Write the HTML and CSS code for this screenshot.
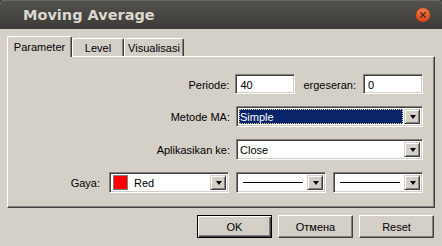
FILE: index.html
```html
<!DOCTYPE html>
<html>
<head>
<meta charset="utf-8">
<link rel="stylesheet" href="styles.css">
</head>
<body>
<div class="window">
  <div class="titlebar">
    <span class="title">Moving Average</span>
    <svg class="close" width="16" height="16" viewBox="0 0 16 16">
      <defs>
        <linearGradient id="cg" x1="0" y1="0" x2="0" y2="1">
          <stop offset="0" stop-color="#f47a4a"/>
          <stop offset="1" stop-color="#d8461a"/>
        </linearGradient>
      </defs>
      <circle cx="8" cy="8" r="7.2" fill="url(#cg)" stroke="#8a3a1c" stroke-width="0.6"/>
      <path d="M5.6 5.6 L10.4 10.4 M10.4 5.6 L5.6 10.4" stroke="#3a2a22" stroke-width="1.2" stroke-linecap="round"/>
    </svg>
  </div>
  <div class="content">
    <div class="tabs">
      <div class="tab active">Parameter</div>
      <div class="tab t-level">Level</div>
      <div class="tab t-vis">Visualisasi</div>
    </div>
    <div class="panel">
      <div class="row">
        <span class="label">Periode:</span>
        <div class="field input"><span>40</span></div>
        <span class="label2">ergeseran:</span>
        <div class="field input"><span>0</span></div>
      </div>
      <div class="row">
        <span class="label">Metode MA:</span>
        <div class="field combo wide">
          <div class="value selected">Simple</div>
          <div class="dd"><span class="tri"></span></div>
        </div>
      </div>
      <div class="row">
        <span class="label">Aplikasikan ke:</span>
        <div class="field combo wide">
          <div class="value">Close</div>
          <div class="dd"><span class="tri"></span></div>
        </div>
      </div>
      <div class="row row-style">
        <span class="label3">Gaya:</span>
        <div class="field combo color">
          <div class="value colorval"><span class="swatch"></span><span>Red</span></div>
          <div class="dd"><span class="tri"></span></div>
        </div>
        <div class="field combo line">
          <div class="value lineval"><span class="hline"></span></div>
          <div class="dd"><span class="tri"></span></div>
        </div>
        <div class="field combo line">
          <div class="value lineval"><span class="hline"></span></div>
          <div class="dd"><span class="tri"></span></div>
        </div>
      </div>
    </div>
    <div class="buttons">
      <div class="btn default"><span>OK</span></div>
      <div class="btn">Отмена</div>
      <div class="btn">Reset</div>
    </div>
  </div>
</div>
</body>
</html>
```

FILE: styles.css
```css
* { box-sizing: border-box; }
html, body {
  margin: 0;
  padding: 0;
  width: 442px;
  height: 246px;
  background: #3c3b37;
  overflow: hidden;
}
body {
  font-family: "Liberation Sans", Arial, sans-serif;
  font-size: 11px;
  color: #000;
}
.window {
  width: 442px;
  height: 246px;
  display: flex;
  flex-direction: column;
  background: #d4d0c8;
  border-radius: 5px 5px 0 0;
  overflow: hidden;
}
.titlebar {
  height: 29px;
  flex: none;
  display: flex;
  align-items: center;
  padding-left: 23px;
  padding-right: 11px;
  background: linear-gradient(#52514c, #3c3b37);
  border-top: 1px solid #65645f;
}
.title {
  font-family: "DejaVu Sans", sans-serif;
  font-weight: bold;
  font-size: 14.5px;
  color: #dcd8cf;
  margin-top: -1px;
}
.close {
  margin-left: auto;
  display: block;
}
.content {
  flex: 1;
  display: flex;
  flex-direction: column;
  padding: 7px 7px 0 7px;
}
.tabs {
  display: flex;
  align-items: flex-end;
  height: 20px;
}
.tab {
  height: 18px;
  padding-top: 3px;
  text-align: center;
  border-top: 1px solid #fff;
  border-left: 1px solid #fff;
  border-right: 1px solid #404040;
  box-shadow: inset -1px 0 #808080;
  border-radius: 2px 2px 0 0;
  background: #d4d0c8;
}
.tab.active {
  height: 21px;
  margin-bottom: -1px;
  position: relative;
  z-index: 1;
  width: 65px;
  padding-top: 4px;
}
.t-level { width: 52px; }
.t-vis { width: 60px; }
.panel {
  width: 428px;
  height: 152px;
  border-top: 1px solid #fff;
  border-left: 1px solid #fff;
  border-right: 1px solid #404040;
  border-bottom: 1px solid #404040;
  box-shadow: inset -1px -1px #808080;
  padding-top: 17px;
  padding-right: 11px;
  display: flex;
  flex-direction: column;
  gap: 12px;
}
.row {
  display: flex;
  align-items: center;
  justify-content: flex-end;
  height: 21px;
}
.row:first-child { height: 20px; }
.label {
  padding-top: 1px;
  margin-right: 6px;
}
.label2 {
  padding-top: 1px;
  margin: 0 7px 0 8px;
}
.label3 {
  padding-top: 1px;
  margin-right: 9px;
}
.field {
  height: 100%;
  background: #fff;
  border: 1px solid;
  border-color: #808080 #fff #fff #808080;
  box-shadow: inset 1px 1px #404040, inset -1px -1px #d4d0c8;
  padding: 2px;
  display: flex;
  align-items: center;
}
.input {
  width: 60px;
  padding-left: 4px;
  padding-top: 3px;
}
.combo {
  height: 21px;
  padding: 2px;
}
.wide { width: 187px; }
.color { width: 120px; margin-right: 7px; }
.line { width: 90px; }
.line + .line { margin-left: 7px; }
.value {
  flex: 1;
  height: 100%;
  display: flex;
  align-items: center;
  padding-left: 1px;
  padding-top: 1px;
}
.value.selected {
  background: #0a246a;
  color: #fff;
  outline: 1px dotted #e8d890;
  outline-offset: -1px;
  margin-right: 1px;
}
.colorval { padding-left: 1px; }
.swatch {
  width: 15px;
  height: 15px;
  background: #ff0000;
  border: 1px solid #808080;
  margin-right: 6px;
  margin-top: -1px;
}
.lineval { padding-left: 4px; padding-right: 4px; }
.hline {
  display: block;
  width: 100%;
  height: 1px;
  background: #000;
  margin-top: -1px;
}
.dd {
  width: 16px;
  height: 100%;
  flex: none;
  background: #d4d0c8;
  border: 1px solid;
  border-color: #d4d0c8 #404040 #404040 #d4d0c8;
  box-shadow: inset 1px 1px #fff, inset -1px -1px #808080;
  display: flex;
  align-items: center;
  justify-content: center;
}
.tri {
  width: 0;
  height: 0;
  border-left: 3.5px solid transparent;
  border-right: 3.5px solid transparent;
  border-top: 4px solid #000;
  margin-left: 1px;
}
.buttons {
  display: flex;
  justify-content: flex-end;
  gap: 6px;
  margin-top: 7px;
  padding-right: 1px;
}
.btn {
  width: 75px;
  height: 23px;
  display: flex;
  align-items: center;
  justify-content: center;
  border: 1px solid;
  border-color: #fff #404040 #404040 #fff;
  box-shadow: inset -1px -1px #808080, inset 1px 1px #d4d0c8;
  padding-top: 1px;
}
.btn.default {
  border: 1px solid #000;
  box-shadow: inset 1px 1px #fff, inset -1px -1px #404040, inset -2px -2px #808080;
}
```
